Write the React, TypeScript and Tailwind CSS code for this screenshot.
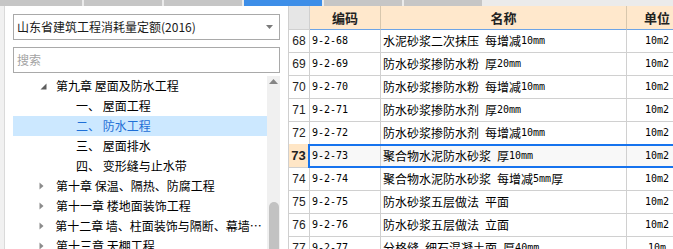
const rows = [
  { n: 68, code: "9-2-68", name: "水泥砂浆二次抹压 每增减10mm", unit: "10m2" },
  { n: 69, code: "9-2-69", name: "防水砂浆掺防水粉 厚20mm", unit: "10m2" },
  { n: 70, code: "9-2-70", name: "防水砂浆掺防水粉 每增减10mm", unit: "10m2" },
  { n: 71, code: "9-2-71", name: "防水砂浆掺防水剂 厚20mm", unit: "10m2" },
  { n: 72, code: "9-2-72", name: "防水砂浆掺防水剂 每增减10mm", unit: "10m2" },
  { n: 73, code: "9-2-73", name: "聚合物水泥防水砂浆 厚10mm", unit: "10m2", selected: true },
  { n: 74, code: "9-2-74", name: "聚合物水泥防水砂浆 每增减5mm厚", unit: "10m2" },
  { n: 75, code: "9-2-75", name: "防水砂浆五层做法 平面", unit: "10m2" },
  { n: 76, code: "9-2-76", name: "防水砂浆五层做法 立面", unit: "10m2" },
  { n: 77, code: "9-2-77", name: "分格缝 细石混凝土面 厚40mm", unit: "10m" },
];

const tree = [
  { kind: "open", text: "第九章 屋面及防水工程" },
  { kind: "leaf", text: "一、 屋面工程" },
  { kind: "leaf", text: "二、 防水工程", selected: true },
  { kind: "leaf", text: "三、 屋面排水" },
  { kind: "leaf", text: "四、 变形缝与止水带" },
  { kind: "closed", text: "第十章 保温、隔热、防腐工程" },
  { kind: "closed", text: "第十一章 楼地面装饰工程" },
  { kind: "closed", text: "第十二章 墙、柱面装饰与隔断、幕墙工程" },
  { kind: "closed", text: "第十三章 天棚工程" },
];

// ascii runs get the narrow song-style mono look
function Mixed({ text }: { text: string }) {
  const parts = text.split(/([\x00-\x7f]+)/).filter(Boolean);
  return (
    <>
      {parts.map((p, i) =>
        /^[\x00-\x7f]+$/.test(p) ? (
          <span key={i} className="font-['DejaVu_Sans_Mono',monospace] text-[10px] whitespace-pre text-black">
            {p}
          </span>
        ) : (
          <span key={i}>{p}</span>
        )
      )}
    </>
  );
}

function TreeRow({ kind, text, selected }: { kind: string; text: string; selected?: boolean }) {
  return (
    <div
      className={`flex h-[20px] items-center whitespace-nowrap ${
        selected ? "bg-[#cce8ff] text-[#1f6fd6]" : "text-black"
      } ${kind === "leaf" ? "pl-[63px]" : "pl-[26px]"}`}
    >
      {kind !== "leaf" && (
        <span className="flex w-[17px] items-center">
          {kind === "open" ? (
            <svg width="7" height="7" viewBox="0 0 7 7" className="ml-[1px]">
              <path d="M6.5 0.5V6.5H0.5Z" fill="#5e5e5e" />
            </svg>
          ) : (
            <svg width="5" height="8" viewBox="0 0 5 8">
              <path d="M0.5 0.5L4.5 4L0.5 7.5Z" fill="#8c8c8c" />
            </svg>
          )}
        </span>
      )}
      <span className="min-w-0 truncate pr-[4px]">{text}</span>
    </div>
  );
}

export default function App() {
  const tabs = [82, 78, 78, 78, 78, 78];

  return (
    <div className="flex h-[249px] w-[673px] flex-col overflow-hidden bg-white font-['Noto_Sans_CJK_SC',sans-serif] text-[12px] leading-[16px]">
      {/* top tab strip */}
      <div className="flex h-[6px] shrink-0 gap-[2px] bg-[#ebebeb]">
        {tabs.map((w, i) => (
          <div
            key={i}
            className={`${i === 3 ? "bg-[#3d8ee8]" : "bg-[#c6c6c6]"} ${w === 82 ? "w-[82px]" : "w-[78px]"}`}
          />
        ))}
      </div>

      <div className="flex min-h-0 flex-1">
        {/* left: quota library tree */}
        <div className="flex w-[288px] shrink-0">
          <div className="w-[5px] border-r border-[#dadada] bg-[#f1f1f1]" />
          <div className="flex w-[282px] flex-col pl-[8px] pr-[7px] pt-[8px]">
            <div className="flex h-[26px] items-center justify-between border border-[#a9a9a9] pl-[3px] pr-[6px] text-[#1a1a1a]">
              <span>山东省建筑工程消耗量定额(2016)</span>
              <svg width="7" height="4" viewBox="0 0 7 4">
                <path d="M0 0H7L3.5 4Z" fill="#7a7a7a" />
              </svg>
            </div>
            <div className="mt-[7px] flex h-[26px] items-center border border-[#a9a9a9] pl-[3px] text-[#a3a3a3]">
              搜索
            </div>
            <div className="mt-[3px] flex min-h-0 flex-1">
              <div className="min-w-0 flex-1 overflow-hidden">
                {tree.map((t, i) => (
                  <TreeRow key={i} {...t} />
                ))}
              </div>
              <div className="flex w-[13px] flex-col items-center bg-[#f0f0f0]">
                <svg width="9" height="5" viewBox="0 0 9 5" className="mt-[3px]">
                  <path d="M0 5L4.5 0L9 5Z" fill="#858585" />
                </svg>
                <div className="mt-[118px] w-[10px] flex-1 rounded-t-[5px] bg-[#c2c2c2]" />
              </div>
            </div>
          </div>
        </div>

        {/* right: quota item table */}
        <div className="min-w-0 flex-1 overflow-hidden border-l border-[#cfcfcf]">
          <div className="flex h-[24px] w-[420px] font-bold text-[13px] text-[#222]">
            <div className="w-[21px] border-r border-b border-[#d0d0d0] bg-[#e6e6e6]" />
            <div className="flex w-[71px] items-center justify-center border-r border-b border-r-[#d8c7ad] border-b-[#6da4e6] bg-[#ffe8cc]">
              编码
            </div>
            <div className="flex w-[246px] items-center justify-center border-r border-b border-r-[#d8c7ad] border-b-[#6da4e6] bg-[#ffe8cc]">
              名称
            </div>
            <div className="flex w-[60px] items-center justify-center border-b border-b-[#6da4e6] bg-[#ffe8cc]">
              单位
            </div>
          </div>

          {rows.map((r) =>
            r.selected ? (
              <div key={r.n} className="flex h-[24px] w-[420px]">
                <div className="flex w-[19px] items-center justify-center border-b border-[#d0d0d0] bg-[#ffe6c6] font-['Liberation_Sans',sans-serif] text-[13px] font-bold text-[#222]">
                  {r.n}
                </div>
                <div className="flex flex-1 border-y-2 border-l-2 border-[#1673ee] bg-[#f8f8f8]">
                  <div className="flex w-[71px] items-center border-r border-[#d0d0d0] pl-[2px]">
                    <Mixed text={r.code} />
                  </div>
                  <div className="flex w-[246px] items-center border-r border-[#d0d0d0] pl-[2px]">
                    <Mixed text={r.name} />
                  </div>
                  <div className="flex w-[60px] items-center justify-center">
                    <Mixed text={r.unit} />
                  </div>
                </div>
              </div>
            ) : (
              <div
                key={r.n}
                className={`flex w-[420px] text-black ${
                  r.n === 72 ? "h-[22px]" : "h-[23px] border-b border-[#d0d0d0]"
                }`}
              >
                <div className="flex w-[21px] items-center justify-center border-r border-[#d0d0d0] font-['Liberation_Sans',sans-serif] text-[12px] text-[#222]">
                  {r.n}
                </div>
                <div className="flex w-[71px] items-center border-r border-[#d0d0d0] pl-[2px]">
                  <Mixed text={r.code} />
                </div>
                <div className="flex w-[246px] items-center border-r border-[#d0d0d0] pl-[2px]">
                  <Mixed text={r.name} />
                </div>
                <div className="flex w-[60px] items-center justify-center">
                  <Mixed text={r.unit} />
                </div>
              </div>
            )
          )}
        </div>
      </div>
    </div>
  );
}
